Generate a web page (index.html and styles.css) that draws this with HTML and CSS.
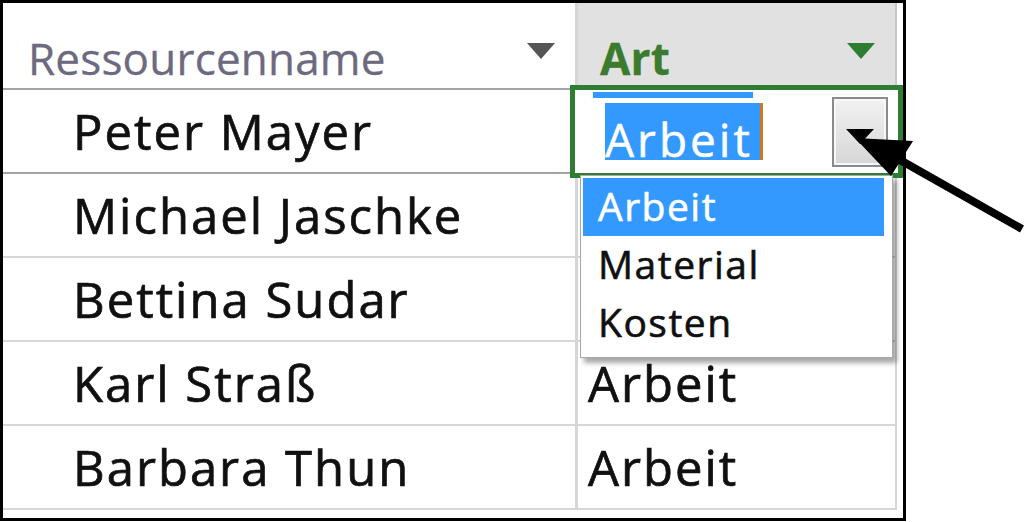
FILE: index.html
```html
<!DOCTYPE html>
<html lang="de">
<head>
<meta charset="utf-8">
<title>Ressourcen</title>
<link rel="stylesheet" href="styles.css">
</head>
<body>
<div class="stage">
  <div class="sheet">
    <div class="cell hdr c1"><span>Ressourcenname</span><span class="tri"></span></div>
    <div class="cell hdr c2"><span>Art</span><span class="tri green"></span></div>

    <div class="cell c1 dark">Peter Mayer</div>
    <div class="cell c2 dark"></div>

    <div class="cell c1">Michael Jaschke</div>
    <div class="cell c2"></div>

    <div class="cell c1">Bettina Sudar</div>
    <div class="cell c2"></div>

    <div class="cell c1">Karl Straß</div>
    <div class="cell c2">Arbeit</div>

    <div class="cell c1">Barbara Thun</div>
    <div class="cell c2">Arbeit</div>
  </div>

  <div class="editor">
    <div class="strip"></div>
    <span class="sel">Arbeit</span>
    <div class="ddbtn"><span class="tri black"></span></div>
  </div>

  <ul class="list">
    <li class="item on">Arbeit</li>
    <li class="item">Material</li>
    <li class="item">Kosten</li>
  </ul>

  <svg class="arrow" width="1024" height="522" viewBox="0 0 1024 522">
    <line x1="1022" y1="229" x2="893" y2="156" stroke="#000" stroke-width="8"/>
    <polygon points="855,138 913,141 891,176" fill="#000"/>
  </svg>
</div>
</body>
</html>
```

FILE: styles.css
```css
html, body {
  margin: 0;
  background: #fff;
}

.stage {
  position: relative;
  width: 1024px;
  height: 522px;
  overflow: hidden;
  font-family: "Open Sans", "Noto Sans", sans-serif;
}

.sheet {
  width: 906px;
  height: 521px;
  box-sizing: border-box;
  border: 3px solid #000;
  display: grid;
  grid-template-columns: 575px 319px;
  grid-template-rows: 87px repeat(5, 84px);
  align-content: start;
}

.cell {
  box-sizing: border-box;
  border-right: 3px solid #d6d6d6;
  border-bottom: 2px solid #d6d6d6;
  font-size: 49px;
  line-height: 49px;
  letter-spacing: 2px;
  color: #101010;
  -webkit-text-stroke: 0.7px currentColor;
  padding-top: 17px;
  white-space: nowrap;
}

.c1 { padding-left: 70px; }
.c2 { padding-left: 10px; border-right-width: 2px; }

.dark { border-bottom-color: #a3a3a3; }

.hdr {
  display: flex;
  justify-content: space-between;
  align-items: flex-start;
  font-size: 44px;
  line-height: 44px;
  letter-spacing: 0.2px;
  -webkit-text-stroke: 0.3px currentColor;
  padding-top: 33px;
  border-bottom-color: #a3a3a3;
}

.hdr.c1 {
  padding-left: 25px;
  color: #6d6a80;
}

.hdr.c2 {
  background: #e1e1e1;
  color: #3a7b2e;
  font-weight: 700;
  padding-left: 22px;
  border-right-color: #c8c8c8;
}

.tri {
  width: 0;
  height: 0;
  border-left: 14px solid transparent;
  border-right: 14px solid transparent;
  border-top: 16px solid #555;
  margin: 7px 20px 0 0;
}

.tri.green { border-top-color: #2f7d32; }

.tri.black {
  border-left-width: 14px;
  border-right-width: 14px;
  border-top: 15px solid #000;
  margin: 0;
}

/* active in-cell editor */
.editor {
  position: absolute;
  left: 570px;
  top: 85px;
  width: 333px;
  height: 93px;
  box-sizing: border-box;
  border: 5px solid #2f7d32;
  background: #fff;
}

.strip {
  position: absolute;
  left: 18px;
  top: 2px;
  width: 160px;
  height: 6px;
  background: #3399ff;
}

.sel {
  position: absolute;
  left: 30px;
  top: 13px;
  width: 158px;
  height: 57px;
  box-sizing: border-box;
  padding-top: 13px;
  background: #3399ff;
  color: #fff;
  font-size: 46px;
  line-height: 46px;
  letter-spacing: 3px;
  -webkit-text-stroke: 0.5px currentColor;
  border-right: 3px solid #d07a1a;
}

.ddbtn {
  position: absolute;
  left: 257px;
  top: 7px;
  width: 56px;
  height: 70px;
  box-sizing: border-box;
  border: 2px solid #8a8a8a;
  box-shadow: inset 0 0 0 2px #f7f7f7;
  background: linear-gradient(#f2f2f2, #d6d6d6);
  display: flex;
  justify-content: center;
  align-items: center;
  padding-top: 8px;
}

/* dropdown list */
.list {
  position: absolute;
  left: 580px;
  top: 175px;
  width: 313px;
  margin: 0;
  padding: 2px 8px 5px 2px;
  list-style: none;
  box-sizing: border-box;
  background: #fff;
  border: 1px solid #a8a8a8;
  box-shadow: 4px 5px 5px rgba(0, 0, 0, 0.35);
}

.item {
  height: 58px;
  box-sizing: border-box;
  padding: 8px 0 0 15px;
  font-size: 39px;
  line-height: 39px;
  letter-spacing: 1.5px;
  color: #101010;
  -webkit-text-stroke: 0.6px currentColor;
}

.item.on {
  background: #3399ff;
  color: #fff;
}

.arrow {
  position: absolute;
  left: 0;
  top: 0;
  pointer-events: none;
}
```
